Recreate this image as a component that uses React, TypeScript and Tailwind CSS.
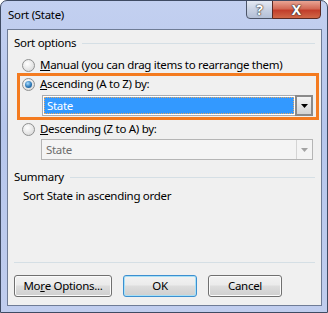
import React from 'react';

function Radio({ checked }: { checked?: boolean }) {
  return (
    <span className="flex h-[13px] w-[13px] shrink-0 items-center justify-center rounded-full border border-[#8f9090] bg-[radial-gradient(circle_at_40%_35%,#ffffff,#d2d2d2)]">
      {checked && (
        <span className="h-[7px] w-[7px] rounded-full bg-[radial-gradient(circle_at_40%_35%,#a8dcff,#2d79b8_55%,#174a7a)]" />
      )}
    </span>
  );
}

function SectionHeader({ label, className }: { label: string; className?: string }) {
  return (
    <div className={`mx-[6px] flex h-[16px] items-center ${className ?? ''}`}>
      <span>{label}</span>
      <span className="ml-[6px] h-px flex-1 bg-[#d5dfe5]" />
    </div>
  );
}

function Arrow({ color }: { color: string }) {
  return (
    <svg height="4" viewBox="0 0 7 4" width="7">
      <path d="M0 0h7L3.5 4z" fill={color} />
    </svg>
  );
}

function WinButton({ children, focused, className }: { children: React.ReactNode; focused?: boolean; className?: string }) {
  return (
    <button
      className={`flex h-[22px] items-center justify-center rounded-[3px] border bg-[linear-gradient(#f2f2f2_0%,#ebebeb_45%,#dddddd_50%,#cfcfcf_100%)] ${
        focused
          ? 'border-[#3c8fd0] shadow-[inset_0_0_0_1px_#a8e0f6]'
          : 'border-[#707070] shadow-[inset_0_0_0_1px_#fbfbfb]'
      } ${className ?? ''}`}
      type="button"
    >
      {children}
    </button>
  );
}

export default function App() {
  return (
    <div className="flex h-[313px] w-[328px] flex-col overflow-hidden rounded-t-[7px] border border-[#3f4b63] bg-[linear-gradient(to_bottom,#c3d0f0,#b6c6ec_40%,#c0cdee)] font-['Noto_Sans',sans-serif] text-[11.5px] leading-[16px] tracking-[-0.3px] text-black">
      {/* Title bar */}
      <div className="flex h-[28px] shrink-0">
        <div className="flex items-center pl-[7px] text-black">Sort (State)</div>
        <div className="-mt-px mr-[6px] ml-auto flex h-[19px] self-start tracking-normal">
          <div className="flex w-[27px] items-center justify-center rounded-bl-[4px] border border-[#4c5568] bg-[linear-gradient(#e4e9f3,#c9d2e3_50%,#b3bfd6)] text-[14px] font-bold text-white [text-shadow:0_0_1px_#333,0_0_1px_#333,0_0_2px_#555]">
            ?
          </div>
          <div className="-ml-px flex w-[49px] items-center justify-center rounded-br-[4px] border border-[#5a2a24] bg-[linear-gradient(#e9a594,#d26a56_45%,#c23e2b_55%,#d06848)] text-[14px] font-bold text-white [text-shadow:0_0_1px_#333,0_0_1px_#333,0_0_2px_#444]">
            X
          </div>
        </div>
      </div>

      {/* Client area */}
      <div className="mb-[6px] ml-[6px] mr-[5px] flex flex-1 flex-col border border-[#6f7c96] bg-[#f0f0f0]">
        <SectionHeader className="mt-[5px]" label="Sort options" />

        <div className="ml-[14px] mt-[6px] flex h-[16px] items-center gap-[5px]">
          <Radio />
          <span>
            <u>M</u>anual (you can drag items to rearrange them)
          </span>
        </div>

        {/* Highlighted ascending option */}
        <div className="ml-[9px] mr-[2px] flex flex-col border-[3px] border-[#f47b20] pb-[1px] pl-[2px]">
          <div className="flex h-[16px] items-center gap-[5px]">
            <Radio checked />
            <span>
              <u>A</u>scending (A to Z) by:
            </span>
          </div>
          <div className="ml-[20px] mr-[3px] mt-[3px] flex h-[21px] border border-[#a9abb0] bg-white p-px">
            <div className="flex flex-1 items-center border border-dotted border-[#e8a860] bg-[#3399ff] pl-[2px] text-white">
              State
            </div>
            <div className="-my-[2px] -mr-[2px] ml-px flex w-[18px] items-center justify-center border-2 border-[#8a8a8a] bg-[linear-gradient(#f4f4f4,#e4e4e4_50%,#d4d4d4)]">
              <Arrow color="#000" />
            </div>
          </div>
        </div>

        <div className="ml-[14px] mt-[1px] flex h-[16px] items-center gap-[5px]">
          <Radio />
          <span>
            <u>D</u>escending (Z to A) by:
          </span>
        </div>
        <div className="ml-[33px] mr-[8px] mt-[2px] flex h-[21px] border border-[#b5b5b5] bg-[#f4f4f4]">
          <div className="flex flex-1 items-center pl-[4px] text-[#6d6d6d]">State</div>
          <div className="flex w-[16px] items-center justify-center border-l border-[#d4d4d4]">
            <Arrow color="#a3a3a3" />
          </div>
        </div>

        <SectionHeader className="mt-[9px]" label="Summary" />
        <div className="ml-[15px] mt-[3px] h-[16px]">Sort State in ascending order</div>

        <div className="flex-1" />
        <div className="mx-[6px] h-px bg-[#d5dfe5]" />
        <div className="ml-[6px] mt-[12px] mb-[8px] flex gap-[11px]">
          <WinButton className="w-[98px]">
            Mo<u>r</u>e Options...
          </WinButton>
          <WinButton className="w-[74px]" focused>
            OK
          </WinButton>
          <WinButton className="w-[74px]">Cancel</WinButton>
        </div>
      </div>
    </div>
  );
}
